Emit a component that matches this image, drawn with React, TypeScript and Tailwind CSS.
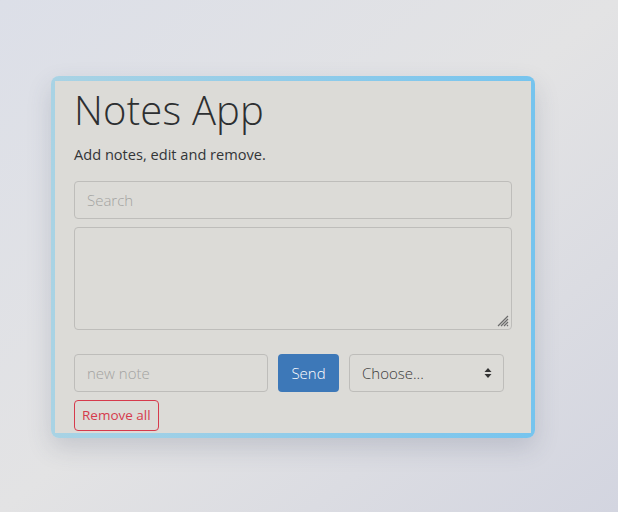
import React, { useState } from 'react';

const font = { fontFamily: '"Open Sans", "Liberation Sans", sans-serif' };

const NotesApp: React.FC = () => {
  const [search, setSearch] = useState('');
  const [note, setNote] = useState('');
  const [notes, setNotes] = useState('');

  return (
    <div
      className="w-[618px] h-[512px] overflow-hidden bg-gradient-to-br from-[#dcdfe8] via-[#e3e3e4] to-[#d3d5e0] pt-[76px] pl-[51px]"
      style={font}
    >
      {/* Card with gradient border */}
      <div className="w-[484px] rounded-lg bg-gradient-to-r from-[#a9d3e4] to-[#76c4ee] px-1 pt-[5px] pb-[5px] shadow-[0_10px_24px_rgba(60,70,100,0.18)]">
        <div className="bg-[#dcdbd7] pl-[19px] pr-[19px] pt-[5px] pb-[2px]">
          <h1 className="text-[40px] leading-[48px] font-light text-[#2d2f31] tracking-[0.2px]">Notes App</h1>
          <p className="mt-[10px] text-[14.6px] leading-[20px] text-[#333537]">Add notes, edit and remove.</p>

          <input
            className="mt-[17px] block w-full h-[38px] rounded border border-[#bebdba] bg-transparent px-3 text-[15px] font-light text-[#333] placeholder:text-[#a3a3a1] outline-none"
            placeholder="Search"
            value={search}
            onChange={(e) => setSearch(e.target.value)}
          />

          <div className="relative mt-2">
            <textarea
              className="block w-full h-[103px] rounded border border-[#bebdba] bg-transparent px-3 py-2 text-[15px] resize-none outline-none"
              value={notes}
              onChange={(e) => setNotes(e.target.value)}
            />
            <svg className="absolute right-[3px] bottom-[3px]" width="12" height="12" viewBox="0 0 12 12">
              <path d="M11 1 L1 11 M11 4 L4 11 M11 7 L7 11 M11 10 L10 11" stroke="#6b6b6b" strokeWidth="1.2" />
            </svg>
          </div>

          <div className="mt-6 flex items-center">
            <input
              className="w-[194px] h-[38px] rounded border border-[#bebdba] bg-transparent px-3 text-[15px] font-light text-[#333] placeholder:text-[#a3a3a1] outline-none"
              placeholder="new note"
              value={note}
              onChange={(e) => setNote(e.target.value)}
            />
            <button className="ml-[10px] w-[61px] h-[38px] rounded bg-[#3d78b8] text-white text-[15px] font-light">Send</button>
            <div className="ml-[10px] w-[155px] h-[38px] rounded border border-[#bebdba] flex items-center justify-between pl-3 pr-[11px] text-[15px] font-light text-[#3a3a3a]">
              <span>Choose...</span>
              <svg width="8" height="12" viewBox="0 0 8 12">
                <path d="M4 1 L7.5 5 L0.5 5 Z M4 11 L0.5 7 L7.5 7 Z" fill="#333" />
              </svg>
            </div>
          </div>

          <button className="mt-2 h-[31px] px-[7px] rounded border border-[#d63a4c] text-[#d63a4c] text-[13.5px]">Remove all</button>
        </div>
      </div>
    </div>
  );
};

export default function App() {
  return <NotesApp />;
}
